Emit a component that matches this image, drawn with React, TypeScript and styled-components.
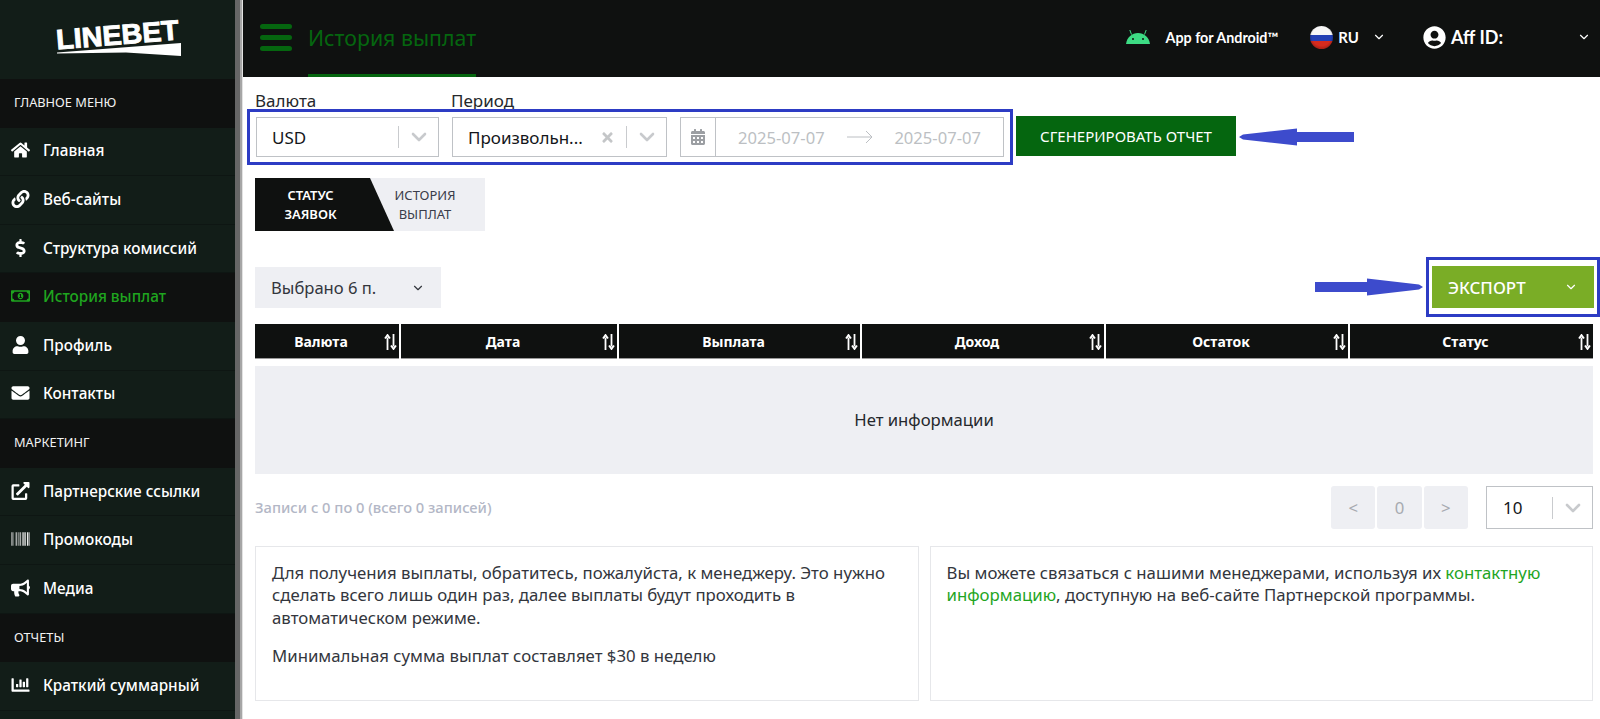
import React from "react";
import styled, { createGlobalStyle } from "styled-components";
import {
  FaHome,
  FaLink,
  FaDollarSign,
  FaRegMoneyBillAlt,
  FaUser,
  FaEnvelope,
  FaExternalLinkAlt,
  FaBarcode,
  FaBullhorn,
  FaChartBar,
  FaCalendarAlt,
  FaUserCircle,
  FaTimes,
} from "react-icons/fa";
import { FiChevronDown } from "react-icons/fi";
import type { IconType } from "react-icons";

const Global = createGlobalStyle`
  html, body { margin: 0; padding: 0; background: #fff; }
  body { font-family: "Noto Sans", "Open Sans", sans-serif; color: #14161a; overflow: hidden; }
  * { box-sizing: border-box; }
`;

// ── Shell ─────────────────────────────────────────────────────────────────────

const Shell = styled.div`
  display: flex;
  width: 1600px;
  height: 719px;
  overflow: hidden;
`;

const Sidebar = styled.aside`
  flex: 0 0 235px;
  background: #121d18;
  overflow: hidden;
`;

const Divider = styled.div`
  flex: 0 0 8px;
  background: linear-gradient(90deg, #666 0 5px, #a6a6a6 5px 7px, #e2e2e2 7px);
`;

const Main = styled.main`
  flex: 1;
  min-width: 0;
`;

// ── Sidebar ───────────────────────────────────────────────────────────────────

const LogoBox = styled.div`
  height: 79px;
  padding: 17px 0 0 56px;
`;

const GroupTitle = styled.div`
  height: 48.6px;
  display: flex;
  align-items: center;
  padding: 0 0 2px 14px;
  background: #0f1110;
  color: #f2f2f2;
  font-size: 12.8px;
`;

const NavRow = styled.div<{ $active?: boolean }>`
  height: 48.6px;
  display: flex;
  align-items: center;
  padding: 0 0 2px 11px;
  gap: 13px;
  background: ${(p) => (p.$active ? "#0f1110" : "transparent")};
  color: ${(p) => (p.$active ? "#1fa51f" : "#fff")};
  border-bottom: 1px solid ${(p) => (p.$active ? "#0f1110" : "#0e1613")};
  font-size: 15.3px;
  font-weight: 500;
  svg { flex: 0 0 19px; font-size: 18px; }
`;

// ── Top bar ───────────────────────────────────────────────────────────────────

const TopBar = styled.header`
  height: 77px;
  display: flex;
  align-items: stretch;
  background: #0f1110;
  padding-left: 17px;
`;

const Burger = styled.div`
  width: 32px;
  display: flex;
  flex-direction: column;
  justify-content: center;
  gap: 6px;
  margin-bottom: 3px;
  span { display: block; height: 5px; border-radius: 3px; background: #05660f; }
`;

const PageTitle = styled.div`
  margin-left: 16px;
  display: flex;
  align-items: center;
  color: #05660f;
  font-size: 21.3px;
  border-bottom: 3px solid #05660f;
`;

const TopRight = styled.div`
  margin-left: auto;
  display: flex;
  align-items: center;
  padding-bottom: 3px;
  color: #fff;
  font-family: Lato, "Noto Sans", sans-serif;
`;

const AppLink = styled.div`
  display: flex;
  align-items: center;
  gap: 16px;
  font-size: 14.3px;
  font-weight: 700;
`;

const Lang = styled.div`
  margin-left: 32px;
  display: flex;
  align-items: center;
  font-size: 15px;
  font-weight: 700;
  span { margin: 0 13px 0 5px; }
`;

const AffBox = styled.div`
  margin-left: 37px;
  margin-right: 9px;
  display: flex;
  align-items: center;
  font-size: 18px;
  font-weight: 700;
  span { margin-left: 5px; width: 126px; }
`;

const Flag = styled.div`
  width: 23px;
  height: 23px;
  border-radius: 50%;
  background:
    radial-gradient(circle at 50% 45%, transparent 55%, rgba(0, 0, 0, 0.55) 100%),
    linear-gradient(180deg, #f7f7f7 0 38%, #2340b4 38% 64%, #d52b1e 64% 100%);
`;

// ── Content ───────────────────────────────────────────────────────────────────

const Content = styled.div`
  padding: 14px 7px 0 12px;
`;

const FieldLabels = styled.div`
  display: flex;
  height: 20px;
  margin-bottom: -2px;
  font-size: 17px;
  line-height: 20px;
  color: #25282c;
  span:first-child { width: 196px; }
`;

const FilterRow = styled.div`
  display: flex;
  align-items: center;
`;

const BlueFrame = styled.div`
  display: flex;
  border: 3px solid #2d3cc4;
  background: #fff;
`;

const FilterFrame = styled(BlueFrame)`
  width: 766px;
  margin-left: -8px;
  padding: 5px 5px 5px 6px;
`;

const SelectBox = styled.div<{ $w: number; $ml?: number }>`
  width: ${(p) => p.$w}px;
  margin-left: ${(p) => p.$ml ?? 0}px;
  height: 40px;
  display: flex;
  align-items: center;
  border: 1px solid #bfc2c6;
  padding-left: 15px;
  font-size: 17px;
  color: #14161a;
`;

const SelectValue = styled.span`
  flex: 1;
  white-space: nowrap;
`;

const ClearIcon = styled(FaTimes)`
  color: #c4c6c8;
  font-size: 15px;
  margin-right: 11px;
`;

const SelectSep = styled.i`
  width: 1px;
  height: 22px;
  background: #c9cbce;
`;

const SelectChevron = styled.div`
  width: 39px;
  display: flex;
  justify-content: center;
  color: #c8cacd;
  font-size: 24px;
  svg { stroke-width: 2.6; }
`;

const DateBox = styled.div`
  width: 324px;
  margin-left: 13px;
  height: 40px;
  display: flex;
  align-items: center;
  border: 1px solid #bfc2c6;
  color: #bcbfc3;
  font-size: 16.6px;
`;

const CalCell = styled.div`
  width: 35px;
  height: 100%;
  display: flex;
  align-items: center;
  justify-content: center;
  border-right: 1px solid #bfc2c6;
  color: #9c9fa3;
  font-size: 16px;
`;

const DateRange = styled.div`
  flex: 1;
  display: flex;
  align-items: center;
  justify-content: space-between;
  padding: 0 22px;
`;

const GenerateBtn = styled.button`
  margin: -2px 3px 0 3px;
  width: 220px;
  height: 40px;
  border: 0;
  background: #05660f;
  color: #fff;
  font-family: inherit;
  font-size: 15px;
  white-space: nowrap;
  padding: 0;
`;

const Tabs = styled.div`
  position: relative;
  width: 230px;
  height: 53px;
  margin-top: 13px;
  display: flex;
  background: #eeeff3;
  font-size: 13px;
  line-height: 19px;
  text-align: center;
  &::before {
    content: "";
    position: absolute;
    left: 0;
    top: 0;
    width: 139px;
    height: 100%;
    background: #0f1110;
    clip-path: polygon(0 0, 115px 0, 139px 100%, 0 100%);
  }
`;

const Tab = styled.div<{ $active?: boolean }>`
  position: relative;
  width: ${(p) => (p.$active ? "111px" : "118px")};
  display: flex;
  align-items: center;
  justify-content: center;
  color: ${(p) => (p.$active ? "#fff" : "#3a3d4a")};
  font-weight: ${(p) => (p.$active ? 600 : 400)};
`;

const ToolRow = styled.div`
  display: flex;
  justify-content: space-between;
  height: 60px;
  margin-top: 26px;
`;

const ColumnPicker = styled.div`
  width: 186px;
  height: 41px;
  margin-top: 10px;
  display: flex;
  align-items: center;
  justify-content: space-between;
  padding: 0 16px;
  background: #eeeff3;
  font-size: 16.6px;
  color: #33363d;
  svg { font-size: 14px; }
`;

const ExportWrap = styled.div`
  display: flex;
  align-items: center;
  margin-right: -7px;
`;

const ExportFrame = styled(BlueFrame)`
  margin-left: 3px;
  padding: 6px 3px;
`;

const ExportBtn = styled.button`
  width: 162px;
  height: 42px;
  display: flex;
  align-items: center;
  justify-content: space-between;
  padding: 0 16px;
  border: 0;
  background: #7aad26;
  color: #fff;
  font-family: inherit;
  font-size: 16.9px;
  font-weight: 500;
  svg { font-size: 14px; }
`;

const TableHead = styled.div`
  display: grid;
  grid-template-columns: 144px 216px 241px 242px 242px 1fr;
  column-gap: 2px;
  margin-top: 7px;
  height: 35px;
`;

const HeadCell = styled.div`
  position: relative;
  display: flex;
  align-items: center;
  justify-content: center;
  padding-right: 12px;
  background: #0f1110;
  border-bottom: 1px solid #9a9a9a;
  color: #fff;
  font-size: 14px;
  font-weight: 700;
`;

const SortIcon = styled.svg`
  position: absolute;
  right: 2px;
  top: 10px;
`;

const EmptyRow = styled.div`
  height: 108px;
  margin-top: 7px;
  display: flex;
  align-items: center;
  justify-content: center;
  padding-bottom: 2px;
  background: #eeeff3;
  font-size: 16.7px;
  color: #25282c;
`;

const FooterRow = styled.div`
  height: 43px;
  margin-top: 12px;
  display: flex;
  align-items: center;
`;

const RecordCount = styled.div`
  padding-bottom: 2px;
  font-size: 14.7px;
  font-weight: 500;
  color: #b3b7c6;
`;

const Pager = styled.div`
  margin-left: auto;
  display: flex;
  gap: 2px;
`;

const PageBtn = styled.div`
  width: 44.3px;
  height: 43px;
  display: flex;
  align-items: center;
  justify-content: center;
  background: #eeeff3;
  border-radius: 3px;
  color: #a7aab0;
  font-size: 16.7px;
`;

const PageSize = styled(SelectBox)`
  height: 43px;
  padding-left: 16px;
`;

const Cards = styled.div`
  display: grid;
  grid-template-columns: 1fr 1fr;
  column-gap: 11px;
  margin-top: 17px;
`;

const Card = styled.div`
  height: 155px;
  padding: 15px 16px 0;
  border: 1px solid #e6e7ea;
  font-size: 16.8px;
  line-height: 22.4px;
  color: #33363d;
  p { margin: 0 0 16px; }
  a { color: #1fa51f; text-decoration: none; }
`;

// ── Small drawings ────────────────────────────────────────────────────────────

const Logo = () => (
  <svg width="126" height="40" viewBox="0 0 126 40" overflow="visible">
    <g transform="rotate(-4.7 1 32.5)">
      <text
        x="1"
        y="32.5"
        textLength="123"
        lengthAdjust="spacingAndGlyphs"
        fontFamily="'Liberation Sans', sans-serif"
        fontWeight="700"
        fontSize="28"
        fill="#fff"
        stroke="#fff"
        strokeWidth="0.9"
      >
        LINEBET
      </text>
    </g>
    <path d="M1 35.5 L125 26 L125 39 L70 35.5 L1 36.5 Z" fill="#fff" />
  </svg>
);

const AndroidIcon = () => (
  <svg width="24" height="16" viewBox="0 0 24 16">
    <path d="M0 15 C1 8 6 4 12 4 C18 4 23 8 24 15 Z" fill="#3ddc84" />
    <path d="M5.5 5.5 L3.8 1 M18.5 5.5 L20.2 1" stroke="#3ddc84" strokeWidth="1" />
    <circle cx="7" cy="10" r="1" fill="#0f1110" />
    <circle cx="17" cy="10" r="1" fill="#0f1110" />
  </svg>
);

const LongArrow = () => (
  <svg width="26" height="14" viewBox="0 0 26 14">
    <path d="M0 7 H25 M19 1 L25 7 L19 13" fill="none" stroke="#bcbfc3" strokeWidth="1" />
  </svg>
);

const ArrowLeft = () => (
  <svg width="115" height="18" viewBox="0 0 115 18">
    <path d="M0 9 L4 6.5 L58 0.5 L58 4 L115 4 L115 14 L58 14 L58 17.5 L4 11.5 Z" fill="#3d4bcc" />
  </svg>
);

const ArrowRight = () => (
  <svg width="108" height="18" viewBox="0 0 108 18">
    <path d="M108 9 L104 6.5 L52 0.5 L52 4 L0 4 L0 14 L52 14 L52 17.5 L104 11.5 Z" fill="#3d4bcc" />
  </svg>
);

const Sort = () => (
  <SortIcon width="13" height="16" viewBox="0 0 13 16">
    <path d="M3.5 16 V3.5 M1 4.5 L3.5 1 L6 4.5 M9.5 0 V12.5 M7 11.5 L9.5 15 L12 11.5" fill="none" stroke="#fff" strokeWidth="1.8" />
  </SortIcon>
);

// ── Data ──────────────────────────────────────────────────────────────────────

type NavItem = { label: string; icon?: IconType; active?: boolean };

const NAV: NavItem[] = [
  { label: "ГЛАВНОЕ МЕНЮ" },
  { label: "Главная", icon: FaHome },
  { label: "Веб-сайты", icon: FaLink },
  { label: "Структура комиссий", icon: FaDollarSign },
  { label: "История выплат", icon: FaRegMoneyBillAlt, active: true },
  { label: "Профиль", icon: FaUser },
  { label: "Контакты", icon: FaEnvelope },
  { label: "МАРКЕТИНГ" },
  { label: "Партнерские ссылки", icon: FaExternalLinkAlt },
  { label: "Промокоды", icon: FaBarcode },
  { label: "Медиа", icon: FaBullhorn },
  { label: "ОТЧЕТЫ" },
  { label: "Краткий суммарный", icon: FaChartBar },
];

const COLUMNS = ["Валюта", "Дата", "Выплата", "Доход", "Остаток", "Статус"];

export default function App() {
  return (
    <Shell>
      <Global />
      <Sidebar>
        <LogoBox>
          <Logo />
        </LogoBox>
        {NAV.map((item) =>
          item.icon ? (
            <NavRow key={item.label} $active={item.active}>
              <item.icon />
              {item.label}
            </NavRow>
          ) : (
            <GroupTitle key={item.label}>{item.label}</GroupTitle>
          ),
        )}
      </Sidebar>
      <Divider />
      <Main>
        <TopBar>
          <Burger>
            <span />
            <span />
            <span />
          </Burger>
          <PageTitle>История выплат</PageTitle>
          <TopRight>
            <AppLink>
              <AndroidIcon />
              App for Android™
            </AppLink>
            <Lang>
              <Flag />
              <span>RU</span>
              <FiChevronDown size={14} />
            </Lang>
            <AffBox>
              <FaUserCircle size={23} />
              <span>Aff ID:</span>
              <FiChevronDown size={14} />
            </AffBox>
          </TopRight>
        </TopBar>
        <Content>
          <FieldLabels>
            <span>Валюта</span>
            <span>Период</span>
          </FieldLabels>
          <FilterRow>
            <FilterFrame>
              <SelectBox $w={183}>
                <SelectValue>USD</SelectValue>
                <SelectSep />
                <SelectChevron>
                  <FiChevronDown />
                </SelectChevron>
              </SelectBox>
              <SelectBox $w={215} $ml={13}>
                <SelectValue>Произвольн...</SelectValue>
                <ClearIcon />
                <SelectSep />
                <SelectChevron>
                  <FiChevronDown />
                </SelectChevron>
              </SelectBox>
              <DateBox>
                <CalCell>
                  <FaCalendarAlt />
                </CalCell>
                <DateRange>
                  <span>2025-07-07</span>
                  <LongArrow />
                  <span>2025-07-07</span>
                </DateRange>
              </DateBox>
            </FilterFrame>
            <GenerateBtn>СГЕНЕРИРОВАТЬ ОТЧЕТ</GenerateBtn>
            <ArrowLeft />
          </FilterRow>
          <Tabs>
            <Tab $active>
              СТАТУС
              <br />
              ЗАЯВОК
            </Tab>
            <Tab>
              ИСТОРИЯ
              <br />
              ВЫПЛАТ
            </Tab>
          </Tabs>
          <ToolRow>
            <ColumnPicker>
              Выбрано 6 п.
              <FiChevronDown />
            </ColumnPicker>
            <ExportWrap>
              <ArrowRight />
              <ExportFrame>
                <ExportBtn>
                  ЭКСПОРТ
                  <FiChevronDown />
                </ExportBtn>
              </ExportFrame>
            </ExportWrap>
          </ToolRow>
          <TableHead>
            {COLUMNS.map((c) => (
              <HeadCell key={c}>
                {c}
                <Sort />
              </HeadCell>
            ))}
          </TableHead>
          <EmptyRow>Нет информации</EmptyRow>
          <FooterRow>
            <RecordCount>Записи с 0 по 0 (всего 0 записей)</RecordCount>
            <Pager>
              <PageBtn>&lt;</PageBtn>
              <PageBtn>0</PageBtn>
              <PageBtn>&gt;</PageBtn>
            </Pager>
            <PageSize $w={107} $ml={18}>
              <SelectValue>10</SelectValue>
              <SelectSep />
              <SelectChevron>
                <FiChevronDown />
              </SelectChevron>
            </PageSize>
          </FooterRow>
          <Cards>
            <Card>
              <p>
                Для получения выплаты, обратитесь, пожалуйста, к менеджеру. Это нужно сделать всего лишь один раз,
                далее выплаты будут проходить в автоматическом режиме.
              </p>
              <p>Минимальная сумма выплат составляет $30 в неделю</p>
            </Card>
            <Card>
              Вы можете связаться с нашими менеджерами, используя их <a href="#contacts">контактную информацию</a>,
              доступную на веб-сайте Партнерской программы.
            </Card>
          </Cards>
        </Content>
      </Main>
    </Shell>
  );
}
